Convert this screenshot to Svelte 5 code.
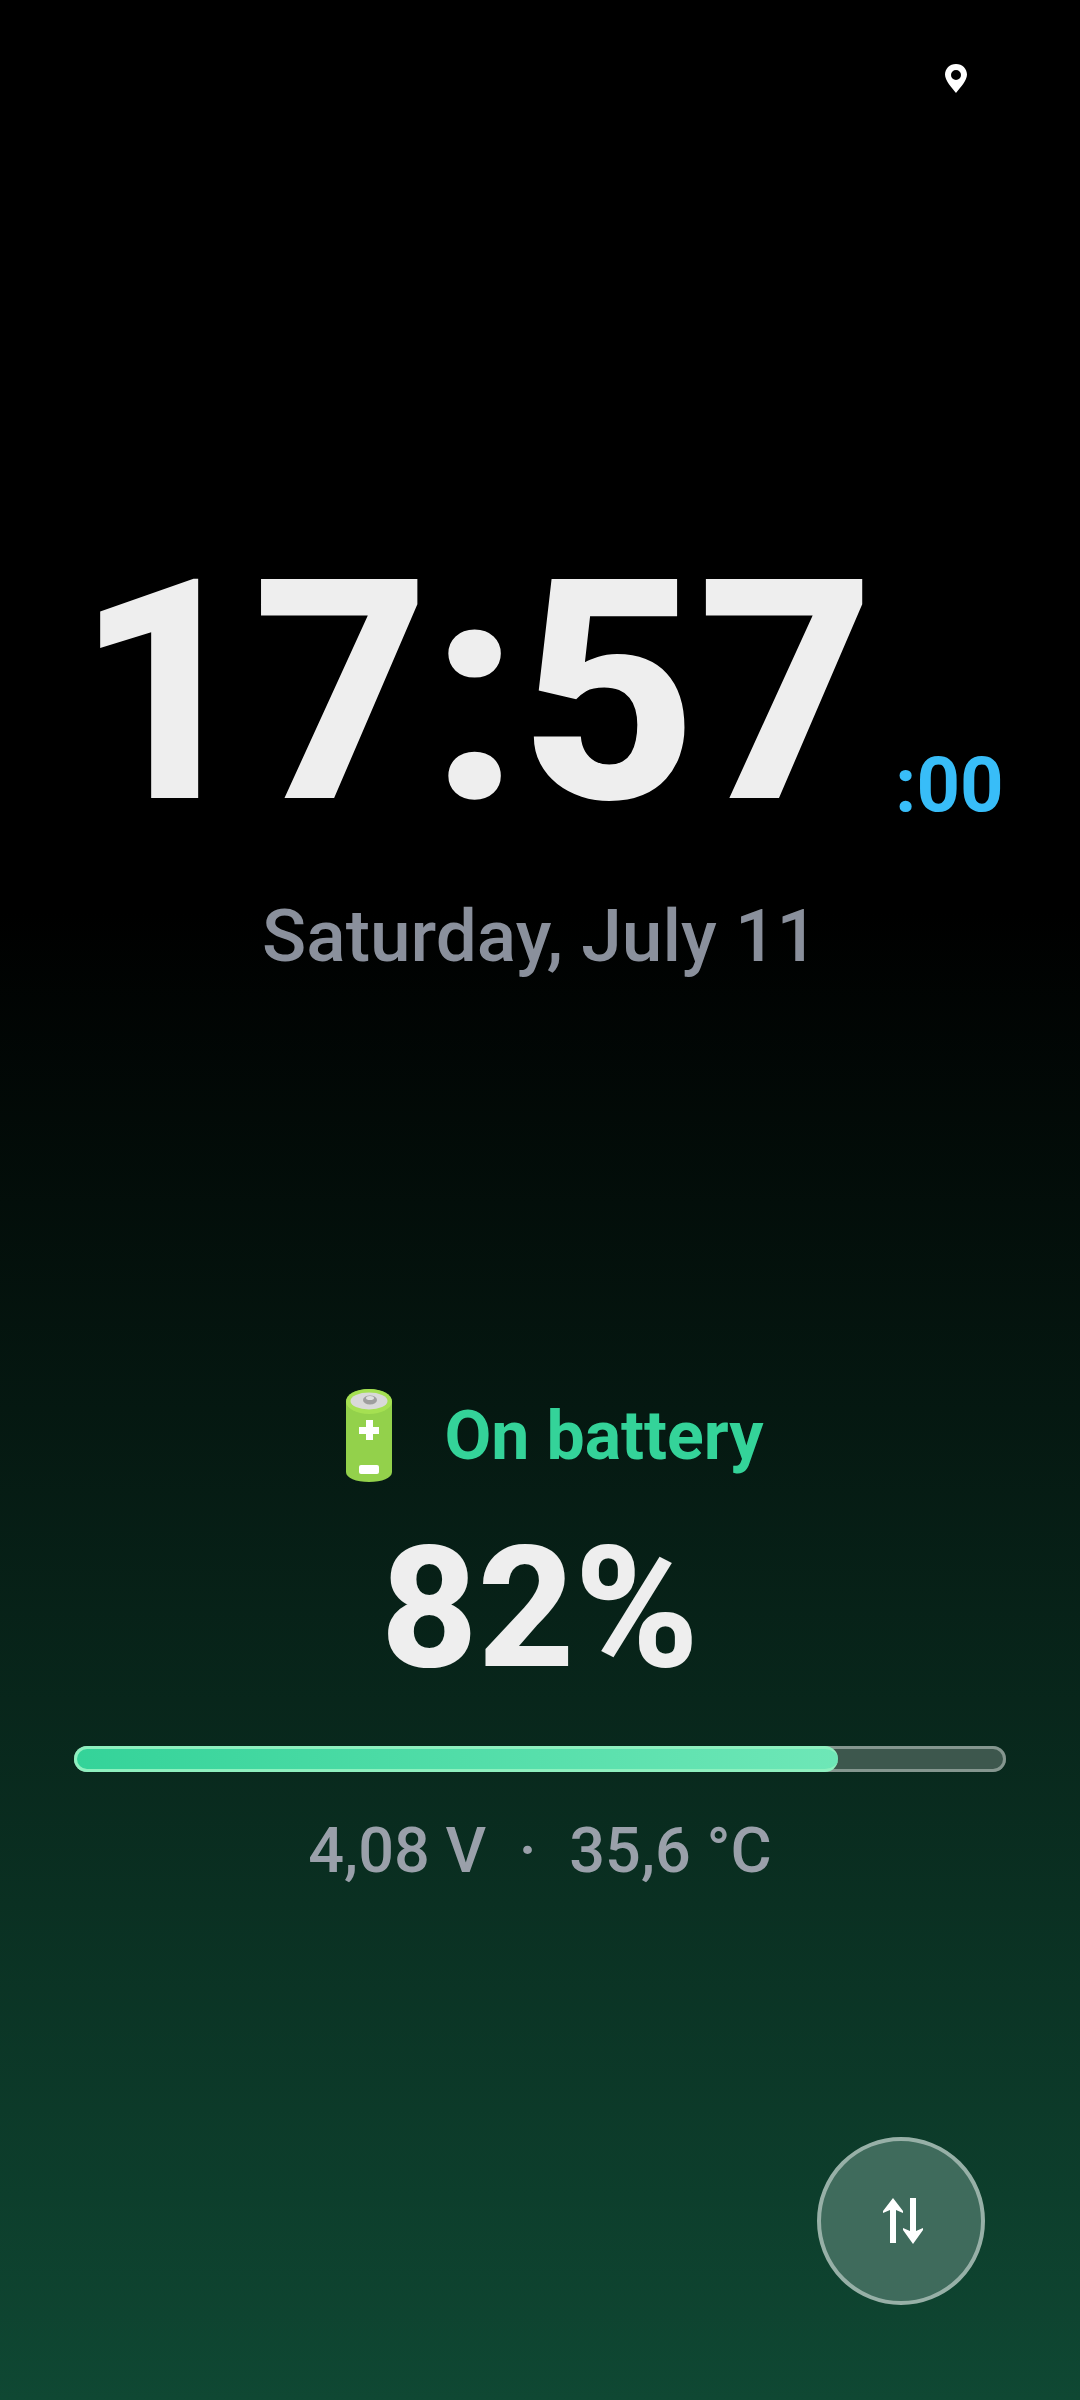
<script>
  let seconds = ':00'
</script>

<div class="screen">
  <div class="status">
    <svg class="pin" viewBox="0 0 24 30" width="24" height="30"><path fill="#fff" fill-rule="evenodd" d="M12 1C5.600 1 1 5.700 1 11.500 1 17.500 8 25 12 30c4-5 11-12.500 11-18.500C23 5.700 18.400 1 12 1zm0 6a5 5 0 1 1 0 10 5 5 0 0 1 0-10z"/></svg>
  </div>

  <div class="clock">
    <span class="time">17:57</span><span class="secs">{seconds}</span>
  </div>
  <div class="date">Saturday, July 11</div>

  <div class="battery">
    <div class="state">
      <svg class="batt" viewBox="0 0 46 93" width="46" height="93">
        <path fill="#93d14b" d="M0 13C0 5 10 0 23 0s23 5 23 13v70c0 6-10 10-23 10S0 89 0 83z"/>
        <ellipse cx="23" cy="12.500" rx="23" ry="12.500" fill="#a5e052"/>
        <ellipse cx="23" cy="12" rx="18.500" ry="8.500" fill="#d9d9d9"/>
        <ellipse cx="24" cy="11" rx="7" ry="4.500" fill="#9e9e9e"/>
        <ellipse cx="24" cy="9" rx="4" ry="2" fill="#e0e0e0"/>
        <path fill="#fff" d="M20 31h7v7h6v7h-6v6h-7v-6h-7v-7h7z"/>
        <rect x="13" y="76" width="20" height="9" rx="2" fill="#fff"/>
      </svg>
      <span class="label">On battery</span>
    </div>
    <div class="percent">82%</div>
    <div class="bar"><div class="fill" style="width: 82%"></div></div>
    <div class="meta">4,08 V <span class="dot">·</span> 35,6 °C</div>
  </div>

  <button class="fab" aria-label="Switch">
    <svg viewBox="0 0 40 48" width="40" height="48" fill="#fff"><path d="M10 1 20 14v2l-7-3v33H7V13l-7 3v-2z"/><path d="M27 1h6v33l7-3v2L30 47 20 33v-2l7 3z"/></svg>
  </button>
</div>

<style>
  :global(body) { margin: 0; background: #000; }
  .screen {
    position: relative;
    height: 2400px;
    overflow: hidden;
    display: flex;
    flex-direction: column;
    font-family: Roboto, sans-serif;
    background: linear-gradient(180deg, #000 0%, #000 38%, #0f4833 100%);
  }
  .status { height: 96px; display: flex; justify-content: flex-end; padding: 63px 112px 0 0; box-sizing: border-box; }
  .pin { display: block; }
  .clock { margin-top: 447px; height: 300px; display: flex; align-items: flex-end; padding-left: 75px; }
  .time { font-size: 308px; font-weight: 800; color: #eee; line-height: 300px; letter-spacing: 0; }
  .secs { font-size: 76px; font-weight: 700; color: #38bdf8; line-height: 90px; margin-left: 20px; margin-bottom: 13px; }
  .date { margin-top: 48px; text-align: center; font-size: 73px; font-weight: 500; color: #8a909c; line-height: 90px; }
  .battery { margin-top: 404px; display: flex; flex-direction: column; align-items: center; }
  .state { display: flex; align-items: center; gap: 52px; height: 100px; padding-left: 30px; }
  .label { font-size: 68px; font-weight: 700; color: #34d399; margin-top: 2px; }
  .percent { font-size: 168px; font-weight: 800; color: #eee; line-height: 200px; margin-top: 24px; }
  .bar { margin-top: 37px; width: 932px; height: 26px; box-shadow: inset 0 0 0 3px #85968f; border-radius: 13px; background: #3d574d; }
  .fill { height: 26px; box-sizing: border-box; border: 3px solid #8ef0bf; border-right: 0; background: linear-gradient(90deg, #34d399, #6ee7b7); border-radius: 13px; }
  .meta { margin-top: 41px; font-size: 63px; font-weight: 500; color: #9aa0aa; line-height: 76px; }
  .dot { margin: 0 17px; }
  .fab { position: absolute; left: 817px; top: 2137px; width: 168px; height: 168px; border-radius: 50%; background: #3f6b5c; border: 4px solid #97b0a7; padding: 0 0 0 3px; display: grid; place-items: center; }
</style>
